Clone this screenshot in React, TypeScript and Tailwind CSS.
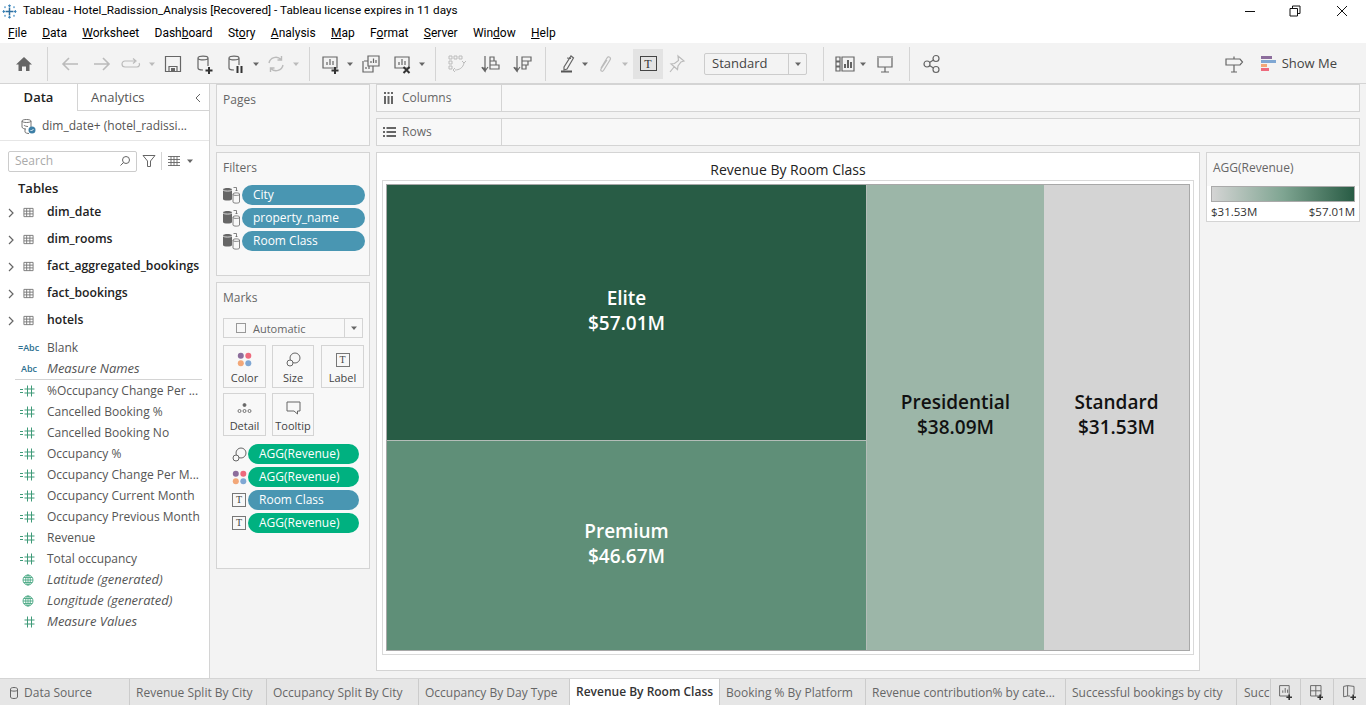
import React from 'react';

const FONT = "font-['Open_Sans',sans-serif]";

const S: React.FC<{ className?: string; children: React.ReactNode; stroke?: string; vb?: string }> = ({ className = '', children, stroke = '#666666', vb = '0 0 20 20' }) => (
  <svg viewBox={vb} fill="none" stroke={stroke} strokeWidth="1.2" className={`shrink-0 ${className}`}>
    {children}
  </svg>
);

const Sep = ({ ml }: { ml: string }) => <div className={`w-px h-[34px] bg-[#d4d4d4] shrink-0 ${ml}`}></div>;

const Caret = ({ className = '', light = false }: { className?: string; light?: boolean }) => (
  <svg viewBox="0 0 8 8" className={`w-2 h-2 shrink-0 ${className}`}>
    <path d="M1 2.500h6L4 6z" fill={light ? '#bbbbbb' : '#666666'} />
  </svg>
);

const Plus = () => <path d="M14 13v7M10.500 16.500h7" stroke="#333333" strokeWidth="2" />;

const TableIcon = () => (
  <svg viewBox="0 0 12 12" className="w-[11px] h-[11px] shrink-0" fill="none" stroke="#777777" strokeWidth="1">
    <path d="M1 1.500h10v9H1zM1 4.500h10M1 7.500h10M4 1.500v9M7.500 1.500v9" />
  </svg>
);

const Hash = ({ calc = false }: { calc?: boolean }) => (
  <svg viewBox="0 0 15 12" className="w-[15px] h-3 shrink-0" fill="none" stroke="#3e9a78" strokeWidth="1">
    {calc && <path d="M0 4.500h3M0 7.500h3" />}
    <path d="M7.500 .5v11M11.500 .5v11M4.500 4h10M4.500 8h10" />
  </svg>
);

const Globe = () => (
  <svg viewBox="0 0 12 12" className="w-[12px] h-[12px] shrink-0" fill="none" stroke="#4aa883" strokeWidth="0.9">
    <circle cx="6" cy="6" r="5" />
    <ellipse cx="6" cy="6" rx="2.300" ry="5" />
    <path d="M1 6h10M1.800 3.500h8.400M1.800 8.500h8.400M6 1v10" />
  </svg>
);

const DataSourceStack = () => (
  <svg viewBox="0 0 18 18" className="w-[18px] h-[18px] shrink-0 -ml-px">
    <path d="M1 3.500C1 1.500 10 1.500 10 3.500V13C10 15 1 15 1 13z" fill="#666666" />
    <path d="M1 3.800C1 5.500 10 5.500 10 3.800" stroke="#f8f8f8" fill="none" strokeWidth="0.8" />
    <path d="M11 8c0-1.500 6.500-1.500 6.500 0v8c0 1.500-6.500 1.500-6.500 0zM11 8.500c0 1.200 6.500 1.200 6.500 0" stroke="#666666" fill="#f8f8f8" strokeWidth="0.8" />
    <path d="M11.500 1.500h3v3.500M13.500 4l1 1 1-1" stroke="#666666" fill="none" strokeWidth="0.8" />
  </svg>
);

const ColorDots = ({ size = 'w-[15px] h-[15px]' }: { size?: string }) => (
  <svg viewBox="0 0 15 15" className={`${size} shrink-0`}>
    <circle cx="3.800" cy="3.800" r="3" fill="#8c6d9c" />
    <circle cx="11.300" cy="3.800" r="3" fill="#ee6a7d" />
    <circle cx="3.800" cy="11.300" r="3" fill="#f2a778" />
    <circle cx="11.300" cy="11.300" r="3" fill="#7fa7d3" />
  </svg>
);

const SizeIcon = ({ size = 'w-[15px] h-[15px]' }: { size?: string }) => (
  <svg viewBox="0 0 15 15" className={`${size} shrink-0`} fill="none" stroke="#666666" strokeWidth="1">
    <circle cx="9" cy="6" r="5" />
    <circle cx="4" cy="11" r="3" fill="#f8f8f8" />
  </svg>
);

const LabelIcon = ({ size = 'w-[14px] h-[14px]' }: { size?: string }) => (
  <div className={`${size} border border-[#777777] flex items-center justify-center shrink-0 text-[10px] leading-none text-[#444444] font-['Liberation_Serif',serif]`}>T</div>
);

const Pill = ({ color, children, className = '' }: { color: string; children: React.ReactNode; className?: string }) => (
  <div className={`h-5 rounded-full flex items-center px-[11px] text-white text-[12px] leading-none ${color} ${className}`}>{children}</div>
);

const MarkBtn = ({ icon, label, w }: { icon: React.ReactNode; label: string; w: string }) => (
  <div className={`h-[43px] border border-[#d4d4d4] bg-[#f8f8f8] flex flex-col items-center pt-[5px] text-[11px] leading-none text-[#444444] ${w}`}>
    <div className="h-[17px] flex items-center">{icon}</div>
    <span className="mt-[4px]">{label}</span>
  </div>
);

const Card = ({ title, className = '', children }: { title: string; className?: string; children?: React.ReactNode }) => (
  <div className={`border border-[#d4d4d4] bg-[#f8f8f8] ${className}`}>
    <div className="pl-[6px] pt-[7px] text-[12px] leading-[16px] text-[#666666]">{title}</div>
    {children}
  </div>
);

const menus: [string, string, string][] = [
  ['', 'F', 'ile'], ['', 'D', 'ata'], ['', 'W', 'orksheet'], ['Dash', 'b', 'oard'], ['St', 'o', 'ry'],
  ['', 'A', 'nalysis'], ['', 'M', 'ap'], ['F', 'o', 'rmat'], ['', 'S', 'erver'], ['Win', 'd', 'ow'], ['', 'H', 'elp'],
];

const tables = ['dim_date', 'dim_rooms', 'fact_aggregated_bookings', 'fact_bookings', 'hotels'];
const measures = [
  '%Occupancy Change Per ...', 'Cancelled Booking %', 'Cancelled Booking No', 'Occupancy %', 'Occupancy Change Per M...',
  'Occupancy Current Month', 'Occupancy Previous Month', 'Revenue', 'Total occupancy',
];

const tabs = [
  { label: 'Revenue Split By City', w: 'w-[137px]' },
  { label: 'Occupancy Split By City', w: 'w-[152px]' },
  { label: 'Occupancy By Day Type', w: 'w-[151px]' },
  { label: 'Revenue By Room Class', w: 'w-[150px]', active: true },
  { label: 'Booking % By Platform', w: 'w-[146px]' },
  { label: 'Revenue contribution% by cate...', w: 'w-[200px]' },
  { label: 'Successful bookings by city', w: 'w-[171px]' },
];

const Tile = ({ name, value, className }: { name: string; value: string; className: string }) => (
  <div className={`flex flex-col items-center justify-center text-[19px] leading-[25px] font-semibold ${className}`}>
    <span>{name}</span>
    <span>{value}</span>
  </div>
);

export default function App() {
  return (
    <div className={`w-[1366px] h-[705px] overflow-hidden bg-white flex flex-col text-[#333333] ${FONT}`}>
      {/* title bar */}
      <div className="h-[22px] flex items-center pl-[2px] shrink-0">
        <svg viewBox="0 0 15 15" className="w-[15px] h-[15px] shrink-0" fill="none" strokeWidth="1.100" stroke="#3b83b8">
          <path d="M7.500 3.500v8M3.500 7.500h8" strokeWidth="1.500" stroke="#2f6f9f" />
          <path d="M7.500 .5v2.500M6 1.700h3M7.500 12v2.500M6 13.300h3M.5 7.500H3M1.700 6v3M12 7.500h2.500M13.300 6v3" />
          <path d="M3 2.200v2M2 3.200h2M12 2.200v2M11 3.200h2M3 10.800v2M2 11.800h2M12 10.800v2M11 11.800h2" strokeWidth="0.900" stroke="#6aa5d0" />
        </svg>
        <span className="ml-[6px] font-['Roboto',sans-serif] text-[11.750px] leading-none text-black whitespace-nowrap">Tableau - Hotel_Radission_Analysis [Recovered] - Tableau license expires in 11 days</span>
        <svg viewBox="0 0 110 14" className="ml-auto mr-[11px] w-[110px] h-[14px]" fill="none" stroke="#111111" strokeWidth="1">
          <path d="M0 7.500h10M45 4.500h7.500v7.500h-7.500zM47.500 4.500v-2.500h7.500v7.500h-2.500M92 2l10 10M102 2l-10 10" />
        </svg>
      </div>

      {/* menu bar */}
      <div className="h-[21px] flex items-center pl-[8px] gap-[15.300px] font-['Roboto',sans-serif] text-[12px] leading-none text-black shrink-0">
        {menus.map(([a, u, b]) => (
          <span key={a + u + b}>{a}<u>{u}</u>{b}</span>
        ))}
      </div>

      {/* toolbar */}
      <div className="h-[41px] bg-[#f3f3f3] border-b border-[#d4d4d4] flex items-center pt-px shrink-0">
        <S className="ml-[14px] w-5 h-5" stroke="none"><path d="M10 3L2 10.500h2.500V17H8v-4.500h4V17h3.500v-6.500H18z" fill="#666666" /></S>
        <Sep ml="ml-[13px]" />
        <S className="ml-[12px] w-5 h-5" stroke="#bbbbbb"><path d="M18 10H3M9 4l-6 6 6 6" strokeWidth="1.600" /></S>
        <S className="ml-[12px] w-5 h-5" stroke="#bbbbbb"><path d="M2 10h15M11 4l6 6-6 6" strokeWidth="1.600" /></S>
        <S className="ml-[9px] w-5 h-5" stroke="#bbbbbb"><path d="M14 7H4a2.500 2.500 0 0 0 0 6h12a2.500 2.500 0 0 0 2-4M12 4.500L15 7l-3 2.500" /></S>
        <Caret className="ml-[7px]" light />
        <S className="ml-[7px] w-5 h-5"><path d="M2.500 2.500h15v15h-15zM6 17.500v-5h8v5" /><path d="M8 14h4v3.500H8z" fill="#666666" stroke="none" /></S>
        <S className="ml-[12px] w-5 h-5"><path d="M3 4c0-2.500 10-2.500 10 0v8M3 4c0 2.500 10 2.500 10 0M3 4v10c0 1.500 2.500 2 5 2" /><Plus /></S>
        <S className="ml-[11px] w-5 h-5"><path d="M3 4c0-2.500 10-2.500 10 0v7M3 4c0 2.500 10 2.500 10 0M3 4v10c0 1.500 2.500 2 5 2" /><path d="M11.500 12v7M15.500 12v7" stroke="#333333" strokeWidth="2" /></S>
        <Caret className="ml-[6px]" />
        <S className="ml-[6px] w-5 h-5" stroke="#bbbbbb"><path d="M3 9a7 7 0 0 1 12-3.500M17 11a7 7 0 0 1-12 3.500M15.500 2v4h-4M4.500 18v-4h4" strokeWidth="1.400" /></S>
        <Caret className="ml-[6px]" light />
        <Sep ml="ml-[9px]" />
        <S className="ml-[11px] w-5 h-5"><path d="M2 3h14v11H2zM6 11V8M9 11V5M12 11V7" /><Plus /></S>
        <Caret className="ml-[5px]" />
        <S className="ml-[7px] w-5 h-5"><path d="M7 2h11v10H7zM10 9V7M12.500 9V4.500M15 9V6M3 7h4M2 7v11h10v-6M5 15v-2M8 15v-3" /></S>
        <S className="ml-[12px] w-5 h-5"><path d="M2 3h14v11H2zM6 11V8M9 11V5M12 11V7" /><path d="M10.500 13l6 6M16.500 13l-6 6" stroke="#333333" strokeWidth="2" /></S>
        <Caret className="ml-[5px]" />
        <Sep ml="ml-[9px]" />
        <S className="ml-[11px] w-5 h-5" stroke="#bbbbbb"><path d="M2 2h3v3H2zM7 2h3v3H7zM12 2h3v3h-3zM2 7h3v3H2zM2 12h3v3H2zM8 16c4 0 8-2 9-7M15 7l2 2 2-2M8 14l-2 2 2 2" strokeWidth="1" /></S>
        <S className="ml-[13px] w-5 h-5"><path d="M5 2v14M2 13l3 4 3-4" /><path d="M5 14v3l-2.500-3z" fill="#666666" /><path d="M10 3h4v4h-4zM10 7h6v4h-6zM10 11h9v4h-9z" /></S>
        <S className="ml-[12px] w-5 h-5"><path d="M5 2v14M2 13l3 4 3-4" /><path d="M5 14v3l-2.500-3z" fill="#666666" /><path d="M10 3h9v4h-9zM10 7h6v4h-6zM10 11h4v4h-4z" /></S>
        <Sep ml="ml-[13px]" />
        <S className="ml-[12px] w-5 h-5"><path d="M6 13L13 2l2.500 2L9 15l-3 1zM9 4l4 .5" /><path d="M3 17.500h11" stroke="#555555" strokeWidth="2" /></S>
        <Caret className="ml-[3px]" />
        <S className="ml-[6px] w-5 h-5" stroke="#bbbbbb"><path d="M6 14l6-10c1.500-2.500 4.500-.5 3 2l-6.500 10.500c-1 1.500-3.500.5-2.500-1.500L12 6" /></S>
        <Caret className="ml-[6px]" light />
        <div className="ml-[4px] w-[30px] h-[30px] bg-[#e3e3e3] flex items-center justify-center shrink-0">
          <div className="w-[17px] h-[15px] border border-[#444444] flex items-center justify-center text-[12px] leading-none text-[#333333] font-['Liberation_Serif',serif]">T</div>
        </div>
        <S className="ml-[4px] w-5 h-5" stroke="#bbbbbb"><path d="M11 2l6 5-3 1-3 4-.5 3.500L4 10l3.500-.5 4-3zM7 13l-4 5" /></S>
        <div className="ml-[17px] w-[103px] h-[22px] border border-[#cccccc] rounded-[2px] flex items-center shrink-0">
          <span className="pl-[7px] flex-1 text-[13px] leading-none text-[#444444]">Standard</span>
          <div className="w-[18px] h-full border-l border-[#cccccc] flex items-center justify-center"><Caret /></div>
        </div>
        <Sep ml="ml-[16px]" />
        <S className="ml-[11px] w-5 h-5"><path d="M1 3h4v4H1zM1 8h4v4H1zM1 13h4v4H1zM7 3h12v14H7z" /><path d="M10 14v-4M13 14V6M16 14V8" strokeWidth="1.800" stroke="#555555" /></S>
        <Caret className="ml-[4px]" />
        <S className="ml-[8px] w-5 h-5"><path d="M2 3h16M3 4v9h14V4M10 13v5M6 18h8" /></S>
        <Sep ml="ml-[14px]" />
        <S className="ml-[12px] w-5 h-5"><circle cx="5" cy="10" r="3" /><circle cx="14" cy="4.500" r="3" /><circle cx="14" cy="15.500" r="3" /><path d="M7.500 8.500l4-2.500M7.500 11.500l4 2.500" /></S>
        <S className="ml-auto w-5 h-5"><path d="M2 5h14l2.500 3-2.500 3H2zM10 2.500V5M10 11v7M7 18h6" /></S>
        <div className="ml-[17px] w-[15px] h-[16px] flex flex-col shrink-0">
          <div className="h-[3px] w-[11px] bg-[#8c6d9c]"></div>
          <div className="mt-[1px] h-[3px] w-[15px] bg-[#7fa7d3]"></div>
          <div className="mt-[1px] h-[3px] w-[6px] bg-[#f2a778]"></div>
          <div className="mt-[1px] h-[3px] w-[8px] bg-[#ee6a7d]"></div>
        </div>
        <span className="ml-[6px] mr-[29px] text-[13px] leading-none text-[#444444]">Show Me</span>
      </div>

      {/* body */}
      <div className="flex-1 min-h-0 flex bg-[#f3f3f3]">
        {/* data pane */}
        <div className="w-[210px] shrink-0 bg-white border-r border-[#d4d4d4] flex flex-col">
          <div className="h-[27px] flex shrink-0">
            <div className="w-[77px] flex items-center justify-center text-[13px] font-semibold text-[#222222]">Data</div>
            <div className="flex-1 flex items-center pt-px pl-[13px] text-[13px] text-[#555555] border-l border-b border-[#d4d4d4]">
              Analytics
              <svg viewBox="0 0 8 10" className="ml-auto mr-[7px] w-2 h-[10px]" fill="none" stroke="#666666"><path d="M6 1L2 5l4 4" /></svg>
            </div>
          </div>
          <div className="h-[30px] flex items-center pl-[20px] border-b border-[#e6e6e6] shrink-0">
            <svg viewBox="0 0 16 16" className="w-4 h-4 shrink-0" fill="none" stroke="#666666" strokeWidth="0.9">
              <path d="M2 3c0-2 9-2 9 0v6M2 3c0 2 9 2 9 0M2 3v6c0 1.500 3 2 4 2M4 7c0 1 3 1.500 4 1.500M5 11v3c0 1 3 1.500 4 1.500" />
              <circle cx="12" cy="12" r="3.500" fill="#3d7fa6" stroke="none" />
              <path d="M10.500 12l1 1 2-2" stroke="#ffffff" />
            </svg>
            <span className="ml-[6px] text-[12px] leading-none text-[#555555] whitespace-nowrap">dim_date+ (hotel_radissi...</span>
          </div>
          <div className="mt-[9px] h-[22px] flex items-center pl-[8px] shrink-0">
            <div className="w-[129px] h-[21px] border border-[#cccccc] rounded-[2px] flex items-center pl-[6px] pr-[5px] text-[12px] text-[#aaaaaa]">
              Search
              <svg viewBox="0 0 12 12" className="ml-auto w-3 h-3" fill="none" stroke="#666666"><circle cx="7" cy="5" r="3.500" /><path d="M4.500 7.500L1.500 10.500" /></svg>
            </div>
            <svg viewBox="0 0 14 14" className="ml-[5px] w-[14px] h-[14px]" fill="none" stroke="#666666"><path d="M1 1.500h12L8.500 7v5.500h-3V7z" /></svg>
            <div className="ml-[5px] w-px h-[18px] bg-[#d4d4d4]"></div>
            <svg viewBox="0 0 12 10" className="ml-[6px] w-3 h-[10px]" fill="none" stroke="#666666" strokeWidth="0.9"><path d="M0 .5h12M0 3.500h12M0 6.500h12M0 9.500h12M3 0v10M6 0v10M9 0v10" /></svg>
            <Caret className="ml-[6px]" />
          </div>
          <div className="mt-[7px] pl-[18px] text-[13px] leading-[18px] font-semibold text-[#222222]">Tables</div>
          <div className="mt-[2px]">
            {tables.map(t => (
              <div key={t} className="h-[27px] flex items-center pl-[8px]">
                <svg viewBox="0 0 6 10" className="w-[6px] h-[10px] shrink-0" fill="none" stroke="#666666" strokeWidth="1.200"><path d="M1 1l4 4-4 4" /></svg>
                <div className="ml-[9px]"><TableIcon /></div>
                <span className="ml-[13px] text-[12.200px] font-semibold text-[#222222] whitespace-nowrap">{t}</span>
              </div>
            ))}
          </div>
          <div className="mt-[3px] h-[21px] flex items-center pl-[18px] text-[12px] text-[#555555]">
            <span className="w-[29px] text-[9px] font-semibold text-[#2d6f8f]">=Abc</span>Blank
          </div>
          <div className="h-[21px] flex items-center pl-[21px] text-[13px] italic text-[#555555]">
            <span className="w-[26px] text-[9px] font-semibold not-italic text-[#2d6f8f]">Abc</span>Measure Names
          </div>
          <div className="ml-[15px] mr-[7px] h-px bg-[#d4d4d4] shrink-0"></div>
          <div>
            {measures.map(m => (
              <div key={m} className="h-[21px] flex items-center pl-[20px] text-[12px] text-[#555555] whitespace-nowrap">
                <Hash calc /><span className="ml-[12px]">{m}</span>
              </div>
            ))}
            {['Latitude (generated)', 'Longitude (generated)'].map(m => (
              <div key={m} className="h-[21px] flex items-center pl-[22px] text-[13px] italic text-[#555555]">
                <Globe /><span className="ml-[13px]">{m}</span>
              </div>
            ))}
            <div className="h-[21px] flex items-center pl-[20px] text-[13px] italic text-[#555555]">
              <Hash /><span className="ml-[12px]">Measure Values</span>
            </div>
          </div>
        </div>

        {/* shelves column */}
        <div className="w-[166px] shrink-0 pl-[6px] pr-[6px] flex flex-col gap-[6px]">
          <Card title="Pages" className="h-[62px]" />
          <Card title="Filters" className="h-[124px]">
            <div className="mt-[9px] flex flex-col gap-[3px] pl-[6px] pr-[4px]">
              {['City', 'property_name', 'Room Class'].map(f => (
                <div key={f} className="flex items-center gap-[2px]">
                  <DataSourceStack />
                  <Pill color="bg-[#4996b2]" className="flex-1">{f}</Pill>
                </div>
              ))}
            </div>
          </Card>
          <Card title="Marks" className="h-[287px]">
            <div className="mt-[12px] mx-[6px] h-5 border border-[#d4d4d4] bg-[#f8f8f8] flex items-center">
              <div className="ml-[12px] w-[10px] h-[10px] border border-[#999999] shrink-0"></div>
              <span className="ml-[7px] flex-1 text-[11px] leading-none text-[#666666]">Automatic</span>
              <div className="w-[18px] h-full border-l border-[#d4d4d4] flex items-center justify-center"><Caret /></div>
            </div>
            <div className="mt-[7px] mx-[6px] grid grid-cols-[43px_43px_43px] gap-x-[6px] gap-y-[5px]">
              <MarkBtn icon={<ColorDots />} label="Color" w="w-[43px]" />
              <MarkBtn icon={<SizeIcon />} label="Size" w="w-[42px]" />
              <MarkBtn icon={<LabelIcon />} label="Label" w="w-[43px]" />
              <MarkBtn icon={
                <svg viewBox="0 0 15 12" className="w-[15px] h-3" fill="none" stroke="#666666" strokeWidth="0.9">
                  <circle cx="7.500" cy="3" r="1.500" fill="#666666" /><circle cx="2.500" cy="9" r="1.500" /><circle cx="7.500" cy="9" r="1.500" /><circle cx="12.500" cy="9" r="1.500" />
                </svg>} label="Detail" w="w-[43px]" />
              <MarkBtn icon={
                <svg viewBox="0 0 15 14" className="w-[15px] h-[14px]" fill="none" stroke="#666666"><path d="M1 1h13v9h-2.500v3L8 10H1z" /></svg>} label="Tooltip" w="w-[42px]" />
            </div>
            <div className="mt-[8px] pl-[13px] flex flex-col gap-[3px]">
              {[
                { icon: <SizeIcon />, label: 'AGG(Revenue)', c: 'bg-[#00b180]' },
                { icon: <ColorDots />, label: 'AGG(Revenue)', c: 'bg-[#00b180]' },
                { icon: <LabelIcon />, label: 'Room Class', c: 'bg-[#4996b2]' },
                { icon: <LabelIcon />, label: 'AGG(Revenue)', c: 'bg-[#00b180]' },
              ].map((p, i) => (
                <div key={i} className="flex items-center">
                  <div className="w-[18px] flex justify-center">{p.icon}</div>
                  <Pill color={p.c} className="w-[111px]">{p.label}</Pill>
                </div>
              ))}
            </div>
          </Card>
        </div>

        {/* worksheet */}
        <div className="flex-1 min-w-0 pr-[6px] flex flex-col">
          <div className="h-[28px] border border-[#d4d4d4] bg-[#f8f8f8] flex items-center shrink-0">
            <div className="w-[125px] h-full border-r border-[#d4d4d4] flex items-center pl-[6px] text-[12px] text-[#666666]">
              <svg viewBox="0 0 11 12" className="w-[11px] h-3 mr-[8px]"><path d="M1 4h2v8H1zM4.500 4h2v8h-2zM8 4h2v8H8zM1 0h2v2H1zM4.500 0h2v2h-2zM8 0h2v2H8z" fill="#666666" /></svg>
              Columns
            </div>
          </div>
          <div className="mt-[6px] h-[28px] border border-[#d4d4d4] bg-[#f8f8f8] flex items-center shrink-0">
            <div className="w-[125px] h-full border-r border-[#d4d4d4] flex items-center pl-[6px] text-[12px] text-[#666666]">
              <svg viewBox="0 0 13 10" className="w-[13px] h-[10px] mr-[6px]"><path d="M0 0h2v2H0zM3.500 0H13v2H3.500zM0 4h2v2H0zM3.500 4H13v2H3.500zM0 8h2v2H0zM3.500 8H13v2H3.500z" fill="#666666" /></svg>
              Rows
            </div>
          </div>
          <div className="mt-[6px] flex gap-[6px] items-start">
            <div className="w-[824px] h-[519px] bg-white border border-[#d4d4d4] flex flex-col shrink-0">
              <div className="h-[27px] flex items-center justify-center text-[14px] leading-none text-[#222222] shrink-0 pt-[7px]">Revenue By Room Class</div>
              <div className="mx-[5px] border border-[#d9d9d9] p-[3px] h-[475px] shrink-0">
                <div className="h-full border border-[#a8a8a8] flex">
                  <div className="w-[480px] flex flex-col shrink-0 border-r border-[#b4bdb8]">
                    <Tile name="Elite" value="$57.01M" className="h-[256px] bg-[#285c45] text-white border-b border-[#b4bdb8] pb-[4px]" />
                    <Tile name="Premium" value="$46.67M" className="flex-1 bg-[#5f8f78] text-white pb-[4px]" />
                  </div>
                  <Tile name="Presidential" value="$38.09M" className="w-[177px] shrink-0 bg-[#9cb6a8] text-[#111111] pb-[6px]" />
                  <Tile name="Standard" value="$31.53M" className="flex-1 bg-[#d4d4d4] text-[#111111] pb-[6px]" />
                </div>
              </div>
            </div>
            <div className="w-[154px] h-[70px] bg-white border border-[#d4d4d4] shrink-0 flex flex-col">
              <div className="h-[33px] bg-[#f8f8f8] pl-[6px] pt-[7px] text-[12px] leading-[16px] text-[#666666] shrink-0">AGG(Revenue)</div>
              <div className="mx-[4px] h-[16px] border border-[#aaaaaa] bg-gradient-to-r from-[#d4d4d4] via-[#7fa592] to-[#285c45] shrink-0"></div>
              <div className="mx-[4px] mt-[2px] flex justify-between text-[11.500px] leading-[16px] text-[#333333]">
                <span>$31.53M</span><span>$57.01M</span>
              </div>
            </div>
          </div>
        </div>
      </div>

      {/* sheet tabs */}
      <div className="h-[27px] bg-[#e6e6e6] border-t border-[#d4d4d4] flex text-[12px] leading-none text-[#666666] shrink-0 overflow-hidden">
        <div className="w-[130px] shrink-0 border-r border-[#cccccc] flex items-center pt-px pl-[10px]">
          <svg viewBox="0 0 8 12" className="w-2 h-3 mr-[6px]" fill="none" stroke="#666666"><path d="M.5 2c0-2 7-2 7 0v8c0 2-7 2-7 0zM.5 3c0 1.500 7 1.500 7 0" /></svg>
          Data Source
        </div>
        {tabs.map(t => (
          <div key={t.label} className={`${t.w} shrink-0 border-r border-[#cccccc] flex pl-[6px] whitespace-nowrap ${t.active ? 'bg-white items-start pl-[5px] pt-[7px] font-semibold text-[#333333]' : 'items-center pt-px'}`}>
            {t.label}
          </div>
        ))}
        <div className="w-[33px] shrink-0 flex items-center pt-px pl-[7px] overflow-hidden">Succ</div>
        <div className="w-[30px] shrink-0 bg-[#e6e6e6] border-l border-[#cccccc] flex items-center justify-center">
          <S className="w-4 h-4" vb="0 0 20 20"><path d="M2 2h12v13H2zM6 11V8M9 11V5M12 11V7" /><Plus /></S>
        </div>
        <div className="w-[33px] shrink-0 border-l border-[#cccccc] flex items-center justify-center">
          <S className="w-4 h-4"><path d="M2 2h13v13H2zM8.500 2v13M2 8.500h13" /><Plus /></S>
        </div>
        <div className="w-[33px] shrink-0 border-l border-[#cccccc] flex items-center justify-center">
          <S className="w-4 h-4"><path d="M2 3l5-1v13l-5 1zM7 2l8 1v10M7 15l3 0" /><Plus /></S>
        </div>
      </div>
    </div>
  );
}
